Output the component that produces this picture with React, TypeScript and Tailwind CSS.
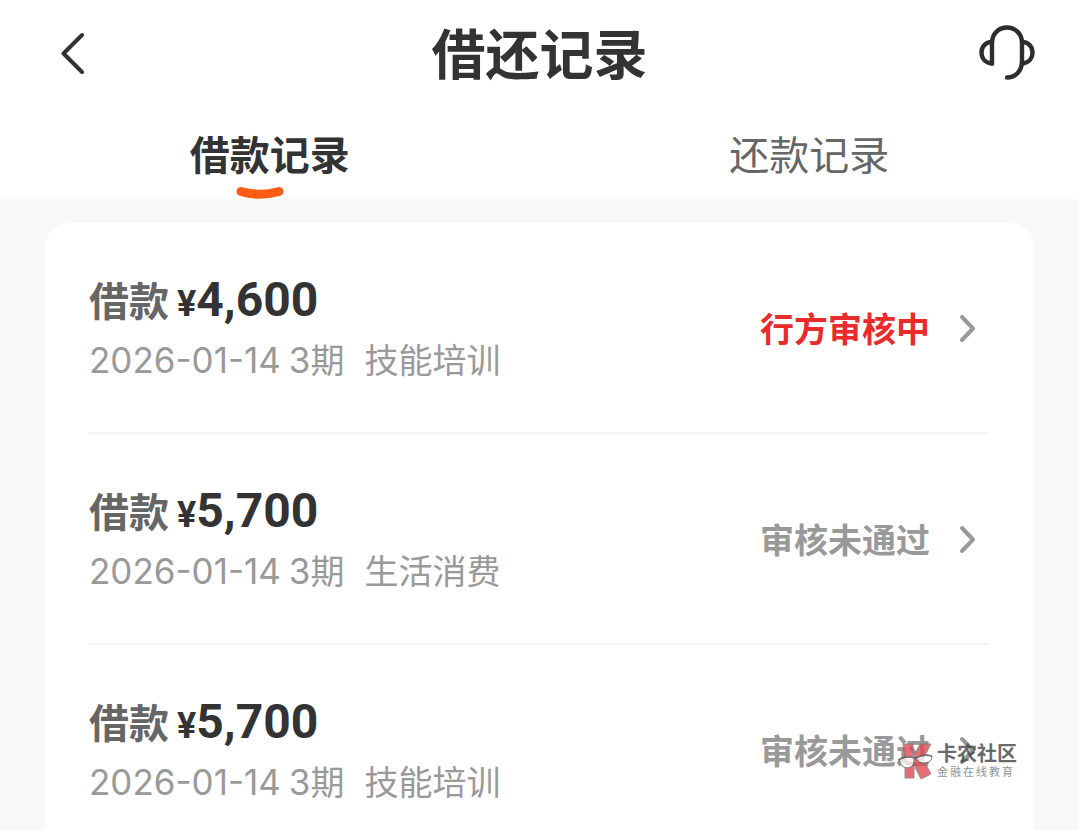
import React from "react";

type LoanRecord = {
  id: number;
  amount: string;
  date: string;
  term: string;
  purpose: string;
  status: string;
  pending: boolean;
};

const records: LoanRecord[] = [
  { id: 1, amount: "4,600", date: "2026-01-14", term: "3", purpose: "技能培训", status: "行方审核中", pending: true },
  { id: 2, amount: "5,700", date: "2026-01-14", term: "3", purpose: "生活消费", status: "审核未通过", pending: false },
  { id: 3, amount: "5,700", date: "2026-01-14", term: "3", purpose: "技能培训", status: "审核未通过", pending: false },
];

function BackIcon() {
  return (
    <svg width="28" height="44" viewBox="0 0 28 44" fill="none" stroke="#333" strokeWidth="4" strokeLinecap="round" strokeLinejoin="round" aria-hidden="true">
      <path d="M22 5 L3.500 23.500 L22 42" />
    </svg>
  );
}

function HeadsetIcon() {
  return (
    <svg width="56" height="58" viewBox="0 0 56 58" fill="none" stroke="#2e2e2e" strokeWidth="4.400" strokeLinecap="round" strokeLinejoin="round" aria-hidden="true">
      <path d="M13 40.500 V20 C13 11 19.500 4.500 28 4.500 S43 11 43 20 V38 C43 48 36.500 54.500 28 54.500" />
      <path d="M13 19 C6 19 2.500 24 2.500 29.500 S6 40 13 40.500" />
      <path d="M43 19 C50 19 53.500 24 53.500 29.500 S50 40 43 40.500" />
    </svg>
  );
}

function ChevronIcon() {
  return (
    <svg width="20" height="30" viewBox="0 0 20 30" fill="none" stroke="#999" strokeWidth="4" strokeLinecap="round" strokeLinejoin="round" aria-hidden="true">
      <path d="M4 4 L15 15.500 L4 27" />
    </svg>
  );
}

function Record({ record }: { record: LoanRecord }) {
  return (
    <li className="border-b-2 border-[#f5f5f5] last:border-b-0">
      <a href="#record" className="flex h-[209px] items-center justify-between pr-3">
        <span className="flex flex-col pt-1">
          <span className="flex h-[60px] items-baseline text-[#333]">
            <span className="text-[40px] leading-[50px] font-bold text-[#666]">借款</span>
            <span className="ml-2 font-[Roboto] text-[36px] leading-[50px] font-bold">¥</span>
            <span className="font-[Roboto] text-[48px] leading-[50px] font-bold">{record.amount}</span>
          </span>
          <span className="flex items-baseline text-[34px] leading-[50px] text-[#999]">
            <span className="font-[Inter] text-[35px]">{record.date}</span>
            <span className="ml-2">
              <span className="font-[Inter] text-[35px]">{record.term}</span>期
            </span>
            <span className="ml-5">{record.purpose}</span>
          </span>
        </span>
        <span className="flex items-center gap-7">
          <span className={record.pending ? "text-[34px] font-bold text-[#e92b2b]" : "text-[34px] font-bold text-[#999]"}>
            {record.status}
          </span>
          <ChevronIcon />
        </span>
      </a>
    </li>
  );
}

function Watermark() {
  return (
    <div className="absolute right-[62px] bottom-[50px] flex items-center gap-1 opacity-80">
      <svg width="35" height="38" viewBox="0 0 35 38" strokeLinejoin="round" aria-hidden="true">
        <path d="M5 2 H15 V15 L22 2 H33 L25 17 L33 32 L23 37 L16 23 V36 H7 V20 Z" fill="#e34b55" stroke="#777" strokeWidth="1" />
        <path d="M1 18 Q8 13 16 16 Q17 25 10 26 Q3 26 1 18 Z" fill="#fff" fillOpacity="0.9" stroke="#555" strokeWidth="1" />
        <path d="M18 16 Q25 11 34 14 Q34 20 28 21 Q21 22 18 16 Z" fill="#fff" fillOpacity="0.9" stroke="#555" strokeWidth="1" />
        <path d="M0 18 Q8 13 17 16 Q25 12 34 14" fill="none" stroke="#555" strokeWidth="1.500" />
      </svg>
      <span className="flex flex-col text-[#444]">
        <span className="text-[20px] leading-[20px] font-bold">卡农社区</span>
        <span className="text-[11px] leading-[16px] tracking-[2px] text-[#777]">金融在线教育</span>
      </span>
    </div>
  );
}

export default function App() {
  return (
    <div className="relative h-screen overflow-hidden bg-[#f8f8f8] font-['Noto_Sans_CJK_SC',sans-serif]">
      <header className="bg-white">
        <div className="grid h-[103px] grid-cols-[1fr_auto_1fr] items-center pr-11 pl-11">
          <button type="button" aria-label="返回" className="justify-self-start pl-4"><BackIcon /></button>
          <h1 className="text-[54px] leading-[80px] font-bold text-[#333]">借还记录</h1>
          <button type="button" aria-label="客服" className="justify-self-end"><HeadsetIcon /></button>
        </div>
        <nav className="grid h-24 grid-cols-2 text-[40px] leading-[60px]">
          <button type="button" className="flex flex-col items-center justify-start pt-5 font-bold text-[#333]">
            <span className="h-[62px]">借款记录</span>
            <svg className="mr-5" width="48" height="14" viewBox="0 0 48 14" fill="none" stroke="#ff5c14" strokeWidth="9" strokeLinecap="round" aria-hidden="true">
              <path d="M5 6.500 Q24 12 43 6.500" />
            </svg>
          </button>
          <button type="button" className="flex items-start justify-center pt-5 text-[#666]">还款记录</button>
        </nav>
      </header>
      <main className="px-[45px] pt-6">
        <ul className="rounded-3xl bg-white px-11">
          {records.map((record) => <Record key={record.id} record={record} />)}
        </ul>
      </main>
      <Watermark />
    </div>
  );
}
